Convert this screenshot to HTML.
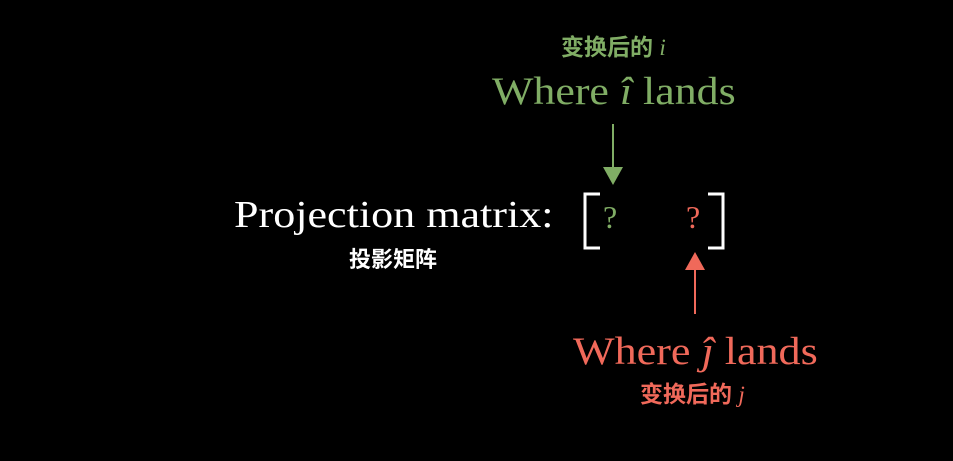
<!DOCTYPE html>
<html><head><meta charset="utf-8"><style>
body{margin:0;width:953px;height:461px;background:#000;position:relative;overflow:hidden}
.t{position:absolute;white-space:nowrap;font-family:"Liberation Serif",serif;line-height:1;transform-origin:0 0}
.c{position:absolute;white-space:nowrap;font-family:"Liberation Sans","Noto Sans CJK SC",sans-serif;font-weight:bold;line-height:1}
.g{color:#80ad65}.r{color:#f0695a}.w{color:#fff}
i{font-family:"Liberation Serif",serif;font-weight:normal}
</style></head><body>
<div class="c g" style="left:561px;top:36px;font-size:23px">变换后的 <i>i</i></div>
<div class="t g" style="left:492px;top:72px;font-size:39px;transform:scaleX(1.125)">Where <i>î</i> lands</div>
<div class="t w" style="left:234px;top:196px;font-size:38px;transform:scaleX(1.16)">Projection matrix:</div>
<div class="c w" style="left:349px;top:249px;font-size:22px">投影矩阵</div>
<div class="t g" style="left:603px;top:201px;font-size:32px">?</div>
<div class="t r" style="left:686px;top:201px;font-size:32px">?</div>
<div class="c r" style="left:640px;top:383px;font-size:23px">变换后的 <i>j</i></div>
<div class="t r" style="left:573px;top:332px;font-size:39px;transform:scaleX(1.13)">Where <i>ĵ</i> lands</div>
<svg width="953" height="461" style="position:absolute;left:0;top:0">
<path d="M600 194H585V248H600M708 194H723V248H708" stroke="#fff" stroke-width="3" fill="none"/>
<line x1="613" y1="124" x2="613" y2="168" stroke="#80ad65" stroke-width="2"/>
<polygon points="603,167 623,167 613,185" fill="#80ad65"/>
<line x1="695" y1="268" x2="695" y2="314" stroke="#f0695a" stroke-width="2"/>
<polygon points="685,270 705,270 695,252" fill="#f0695a"/>
</svg>
</body></html>
